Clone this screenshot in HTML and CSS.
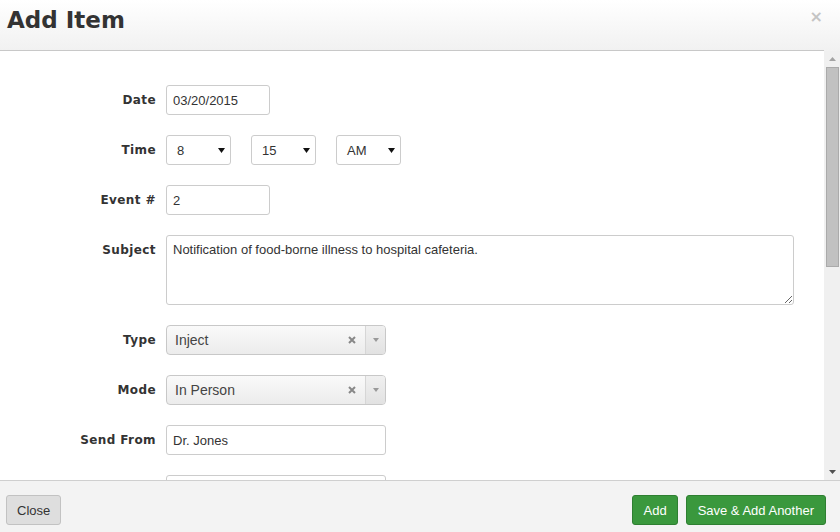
FILE: index.html
```html
<!DOCTYPE html>
<html lang="en">
<head>
    <meta charset="UTF-8">
    <title>Add Item</title>
    <link rel="stylesheet" href="styles.css">
</head>
<body>

    <div class="modal">
        <div class="modal-header">
            <div class="header-inner">
                <h1>Add Item</h1>
                <button class="close">&times;</button>
            </div>
        </div>

        <div class="modal-body">
            <div class="scroll-content">
                <form class="item-form">
                    <div class="form-row">
                        <label>Date</label>
                        <input class="input input-short" type="text" value="03/20/2015">
                    </div>
                    <div class="form-row">
                        <label>Time</label>
                        <div class="time-group">
                            <div class="select">8<svg class="caret" width="7" height="5" viewBox="0 0 7 5"><path d="M0 0H7L3.5 5Z"/></svg></div>
                            <div class="select">15<svg class="caret" width="7" height="5" viewBox="0 0 7 5"><path d="M0 0H7L3.5 5Z"/></svg></div>
                            <div class="select">AM<svg class="caret" width="7" height="5" viewBox="0 0 7 5"><path d="M0 0H7L3.5 5Z"/></svg></div>
                        </div>
                    </div>
                    <div class="form-row">
                        <label>Event #</label>
                        <input class="input input-short" type="text" value="2">
                    </div>
                    <div class="form-row">
                        <label>Subject</label>
                        <textarea class="input input-area">Notification of food-borne illness to hospital cafeteria.</textarea>
                    </div>
                    <div class="form-row">
                        <label>Type</label>
                        <div class="chosen">
                            <span class="chosen-text">Inject</span>
                            <svg class="chosen-clear" width="8" height="8" viewBox="0 0 8 8"><path d="M1 1L7 7M7 1L1 7"/></svg>
                            <span class="chosen-arrow"><svg width="6" height="4" viewBox="0 0 6 4"><path d="M0 0H6L3 4Z"/></svg></span>
                        </div>
                    </div>
                    <div class="form-row">
                        <label>Mode</label>
                        <div class="chosen">
                            <span class="chosen-text">In Person</span>
                            <svg class="chosen-clear" width="8" height="8" viewBox="0 0 8 8"><path d="M1 1L7 7M7 1L1 7"/></svg>
                            <span class="chosen-arrow"><svg width="6" height="4" viewBox="0 0 6 4"><path d="M0 0H6L3 4Z"/></svg></span>
                        </div>
                    </div>
                    <div class="form-row">
                        <label>Send From</label>
                        <input class="input input-mid" type="text" value="Dr. Jones">
                    </div>
                    <div class="form-row">
                        <label></label>
                        <input class="input input-mid" type="text" value="">
                    </div>
                </form>
            </div>

            <div class="scrollbar">
                <div class="sb-arrow sb-up"><svg width="7" height="4" viewBox="0 0 7 4"><path d="M0 4L3.5 0L7 4Z"/></svg></div>
                <div class="sb-track">
                    <div class="sb-thumb"></div>
                </div>
                <div class="sb-arrow sb-down"><svg width="7" height="4" viewBox="0 0 7 4"><path d="M0 0H7L3.5 4Z"/></svg></div>
            </div>
        </div>

        <div class="modal-footer">
            <button class="btn btn-default">Close</button>
            <div class="footer-right">
                <button class="btn btn-success">Add</button>
                <button class="btn btn-success btn-wide">Save &amp; Add Another</button>
            </div>
        </div>
    </div>

</body>
</html>
```

FILE: styles.css
```css
body {
    margin: 0;
    font-family: "Liberation Sans", Arial, sans-serif;
    font-size: 13px;
    color: #333;
    background: #fff;
}

.modal {
    display: flex;
    flex-direction: column;
    height: 532px;
    width: 840px;
    overflow: hidden;
}

/* header */
.modal-header {
    height: 51px;
    flex: none;
    background: linear-gradient(to bottom, #ffffff, #f1f1f1);
}

.header-inner {
    height: 50px;
    margin-right: 16px;
    display: flex;
    justify-content: space-between;
    align-items: flex-start;
    padding-left: 7px;
    border-bottom: 1px solid #c8c8c8;
}

.modal-header h1 {
    margin: 0;
    font-family: "DejaVu Sans", Verdana, sans-serif;
    font-size: 23px;
    font-weight: bold;
    line-height: 40px;
    color: #333;
}

.close {
    background: none;
    border: none;
    padding: 0;
    margin: 7px 1px 0 0;
    font-family: "DejaVu Sans", Arial, sans-serif;
    font-size: 16px;
    font-weight: bold;
    line-height: 20px;
    color: #c4c4c4;
    cursor: pointer;
}

/* body */
.modal-body {
    flex: 1;
    display: flex;
    min-height: 0;
}

.scroll-content {
    flex: 1;
    overflow: hidden;
}

.scrollbar {
    width: 16px;
    flex: none;
    display: flex;
    flex-direction: column;
    background: #f0f0f0;
}

.sb-arrow {
    height: 16px;
    display: flex;
    justify-content: center;
    align-items: center;
}

.sb-up {
    fill: #a3a3a3;
}

.sb-down {
    fill: #505050;
}

.sb-track {
    flex: 1;
    padding: 0 1px 0 2px;
}

.sb-thumb {
    height: 200px;
    box-sizing: border-box;
    background: #c1c1c1;
    border: 1px solid #aaaaaa;
}

.item-form {
    padding: 34px 30px 0 0;
}

.form-row {
    display: flex;
    align-items: flex-start;
    margin-bottom: 20px;
}

.form-row label {
    width: 156px;
    flex: none;
    padding-right: 10px;
    text-align: right;
    font-family: "DejaVu Sans", Verdana, sans-serif;
    font-size: 12px;
    font-weight: bold;
    letter-spacing: 0.4px;
    line-height: 30px;
    color: #333;
}

.input {
    box-sizing: border-box;
    height: 30px;
    margin: 0;
    padding: 0 6px;
    border: 1px solid #cccccc;
    border-radius: 3px;
    font-family: "Liberation Sans", Arial, sans-serif;
    font-size: 13px;
    color: #333;
    background: #fff;
}

.input-short {
    width: 104px;
}

.input-mid {
    width: 220px;
}

.input-area {
    width: 628px;
    height: 70px;
    padding: 6px;
    line-height: 16px;
    resize: vertical;
}

/* time selects */
.time-group {
    display: flex;
    gap: 20px;
}

.select {
    box-sizing: border-box;
    width: 65px;
    height: 30px;
    display: flex;
    justify-content: space-between;
    align-items: center;
    padding: 0 5px 0 10px;
    border: 1px solid #cccccc;
    border-radius: 3px;
    background: #fff;
    font-size: 13px;
    color: #333;
}

.caret {
    fill: #111;
}

/* chosen style dropdown */
.chosen {
    box-sizing: border-box;
    width: 220px;
    height: 30px;
    display: flex;
    align-items: center;
    border: 1px solid #c8c8c8;
    border-radius: 4px;
    background: linear-gradient(to bottom, #fafafa, #ececec);
    color: #444;
}

.chosen-text {
    flex: 1;
    padding-left: 8px;
    font-size: 14px;
}

.chosen-clear {
    margin-right: 9px;
    stroke: #888;
    stroke-width: 2;
}

.chosen-arrow {
    width: 19px;
    height: 28px;
    display: flex;
    justify-content: center;
    align-items: center;
    fill: #999;
    border-left: 1px solid #d6d6d6;
    background: linear-gradient(to bottom, #f0f0f0, #e2e2e2);
    border-radius: 0 3px 3px 0;
}

/* footer */
.modal-footer {
    height: 52px;
    flex: none;
    box-sizing: border-box;
    display: flex;
    justify-content: space-between;
    align-items: flex-start;
    padding: 14px 14px 0 6px;
    background: #f3f3f3;
    border-top: 1px solid #cfcfcf;
}

.footer-right {
    display: flex;
    gap: 8px;
}

.btn {
    height: 30px;
    padding: 0 10px;
    border-radius: 3px;
    font-family: "Liberation Sans", Arial, sans-serif;
    font-size: 13px;
    cursor: pointer;
}

.btn-default {
    width: 55px;
    background: #dedede;
    border: 1px solid #c2c2c2;
    color: #333;
}

.btn-success {
    background: #3a983d;
    border: 1px solid #2e7f31;
    color: #fff;
}

.btn-wide {
    padding: 0 11px;
}
```
